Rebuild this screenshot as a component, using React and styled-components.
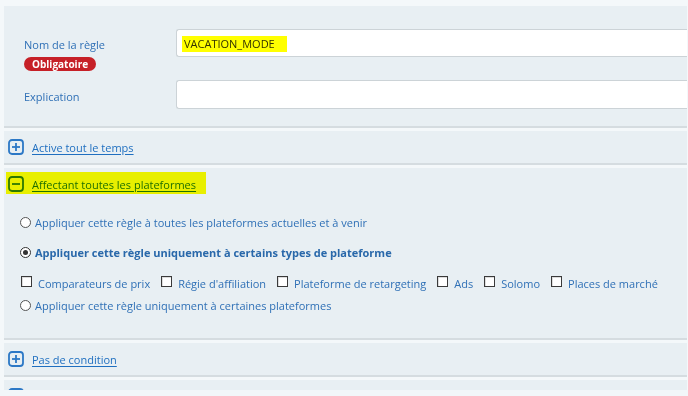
import React from 'react';
import styled, { createGlobalStyle, css } from 'styled-components';

const GlobalStyle = createGlobalStyle`
  html, body {
    margin: 0;
    padding: 0;
    background: #f4f8fa;
  }
  body {
    font-family: "Open Sans", "Noto Sans", sans-serif;
    font-size: 11px;
    color: #2e6fb4;
  }
`;

const platformTypes = [
  'Comparateurs de prix',
  "Régie d'affiliation",
  'Plateforme de retargeting',
  'Ads',
  'Solomo',
  'Places de marché',
];

function ToggleIcon({ open }) {
  return (
    <svg width="16" height="16" viewBox="0 0 16 16" aria-hidden="true">
      <rect x="1" y="1" width="14" height="14" rx="3" fill="none" stroke="#2c78c6" strokeWidth="1.8" />
      <line x1="4" y1="8" x2="12" y2="8" stroke="#2c78c6" strokeWidth="1.8" />
      {!open && <line x1="8" y1="4" x2="8" y2="12" stroke="#2c78c6" strokeWidth="1.8" />}
    </svg>
  );
}

function CollapsibleHeader({ title, open, marked }) {
  const content = (
    <>
      <ToggleIcon open={open} />
      <HeaderLink href="#">{title}</HeaderLink>
    </>
  );
  return (
    <Toggle>
      {marked ? <HeaderMark>{content}</HeaderMark> : content}
    </Toggle>
  );
}

function App() {
  return (
    <Page>
      <GlobalStyle />
      <Stack>
        <Panel>
          <FormGrid>
            <LabelCell>
              <FieldLabel>Nom de la règle</FieldLabel>
              <Badge>Obligatoire</Badge>
            </LabelCell>
            <TextField>
              <FieldMark>VACATION_MODE</FieldMark>
            </TextField>
            <LabelCell $offset={9}>
              <FieldLabel>Explication</FieldLabel>
            </LabelCell>
            <TextField $tall />
          </FormGrid>
        </Panel>

        <Panel>
          <CollapsibleHeader title="Active tout le temps" />
        </Panel>

        <Panel>
          <CollapsibleHeader title="Affectant toutes les plateformes" open marked />
          <OptionBody>
            <Option $gap={0}>
              <Radio />
              Appliquer cette règle à toutes les plateformes actuelles et à venir
            </Option>
            <Option $gap={10} $bold>
              <Radio $checked />
              Appliquer cette règle uniquement à certains types de plateforme
            </Option>
            <CheckRow>
              {platformTypes.map(name => (
                <CheckItem key={name}>
                  <Checkbox />
                  {name}
                </CheckItem>
              ))}
            </CheckRow>
            <Option $gap={2}>
              <Radio />
              Appliquer cette règle uniquement à certaines plateformes
            </Option>
          </OptionBody>
        </Panel>

        <Panel>
          <CollapsibleHeader title="Pas de condition" />
        </Panel>

        <Panel>
          <CollapsibleHeader title="" />
        </Panel>
      </Stack>
      <Footer />
    </Page>
  );
}

const Page = styled.div`
  height: 396px;
  display: flex;
  flex-direction: column;
  overflow: hidden;
`;

const Stack = styled.div`
  flex: 1;
  min-height: 0;
  overflow: hidden;
  display: flex;
  flex-direction: column;
  gap: 3px;
  padding: 6px 1px 0 4px;
`;

const Footer = styled.div`
  flex: none;
  height: 6px;
  background: #f2f6f9;
`;

const Panel = styled.section`
  flex: none;
  background: #e8eff3;
  border-bottom: 2px solid #d5dce0;
`;

const FormGrid = styled.div`
  display: grid;
  grid-template-columns: 152px 1fr;
  align-items: start;
  row-gap: 9px;
  padding: 23px 0 17px 20px;
`;

const LabelCell = styled.div`
  display: flex;
  flex-direction: column;
  align-items: flex-start;
  padding-top: ${p => p.$offset ?? 8}px;
`;

const FieldLabel = styled.span`
  line-height: 15px;
  color: #2f70b6;
`;

const Badge = styled.span`
  margin-top: 5px;
  height: 14px;
  padding: 0 8px;
  border-radius: 7px;
  background: #c62027;
  color: #fff;
  font-weight: 700;
  font-size: 10px;
  line-height: 14px;
`;

const TextField = styled.div`
  box-sizing: border-box;
  height: ${p => (p.$tall ? 29 : 28)}px;
  display: flex;
  align-items: center;
  padding-left: 7px;
  background: #fff;
  border: 1px solid #ccd3d7;
  border-right: none;
  border-radius: 3px 0 0 3px;
  color: #333;
  font-size: 11px;
`;

const markStyle = css`
  position: relative;
  &::after {
    content: '';
    position: absolute;
    background: #ffff00;
    mix-blend-mode: multiply;
    pointer-events: none;
  }
`;

const FieldMark = styled.span`
  ${markStyle}
  line-height: 15px;
  &::after {
    inset: 0 -12px -1px -2px;
  }
`;

const Toggle = styled.div`
  height: 32px;
  display: flex;
  align-items: center;
  gap: 8px;
  padding-left: 4px;
`;

const HeaderMark = styled.span`
  ${markStyle}
  display: inline-flex;
  align-items: center;
  gap: 8px;
  &::after {
    inset: -4px -10px -2px -2px;
  }
`;

const HeaderLink = styled.a`
  color: #1f6fc0;
  text-decoration: underline;
  text-underline-offset: 2px;
  font-size: 11px;
`;

const OptionBody = styled.div`
  display: flex;
  flex-direction: column;
  padding: 12px 0 23px 16px;
`;

const Option = styled.label`
  display: flex;
  align-items: center;
  gap: 4px;
  height: 20px;
  margin-top: ${p => p.$gap}px;
  font-weight: ${p => (p.$bold ? 700 : 400)};
  color: ${p => (p.$bold ? '#2968aa' : '#2f70b6')};
`;

const Radio = styled.span`
  flex: none;
  box-sizing: border-box;
  width: 11px;
  height: 11px;
  border-radius: 50%;
  border: 1px solid #555;
  background: #fff;
  position: relative;
  ${p =>
    p.$checked &&
    css`
      border-color: #333;
      &::after {
        content: '';
        position: absolute;
        inset: 2px;
        border-radius: 50%;
        background: #333;
      }
    `}
`;

const CheckRow = styled.div`
  display: flex;
  align-items: center;
  gap: 11px;
  height: 20px;
  margin-top: 11px;
  padding-left: 1px;
`;

const CheckItem = styled.label`
  display: flex;
  align-items: center;
  gap: 6px;
  color: #2f70b6;
`;

const Checkbox = styled.span`
  flex: none;
  box-sizing: border-box;
  width: 11px;
  height: 11px;
  margin-bottom: 3px;
  border: 1px solid #3a3a3a;
  background: #fff;
  box-shadow: inset 1px 1px 0 #ddd;
`;

export default App;
